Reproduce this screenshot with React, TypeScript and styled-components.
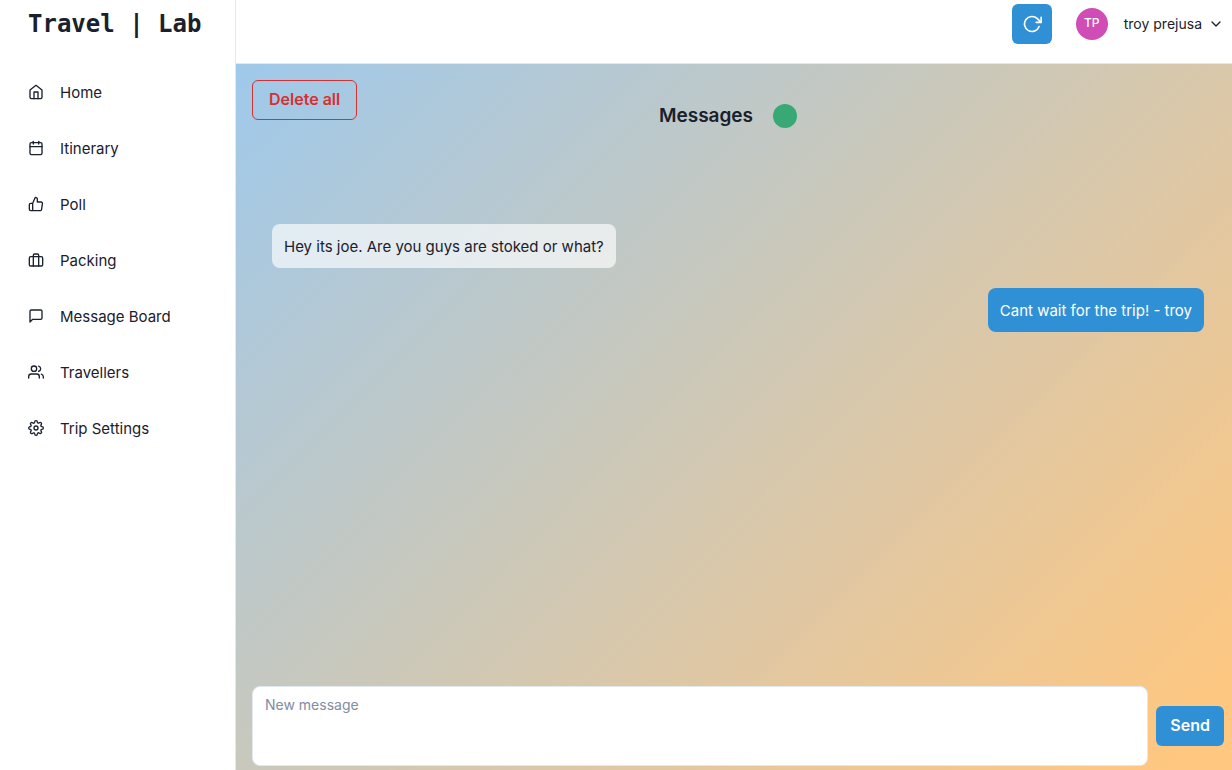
import React from 'react';
import styled, { createGlobalStyle } from 'styled-components';
import { IconType } from 'react-icons';
import {
  FiHome, FiCalendar, FiThumbsUp, FiBriefcase, FiMessageSquare, FiUsers, FiSettings, FiChevronDown, FiRotateCw,
} from 'react-icons/fi';

const GlobalStyle = createGlobalStyle`
  *, *::before, *::after { box-sizing: border-box; }
  body {
    margin: 0;
    background: #fff;
    color: #1a202c;
    font-family: Inter, "Liberation Sans", sans-serif;
    font-size: 15px;
    line-height: 24px;
  }
  h1, h2, p, ul { margin: 0; padding: 0; }
  button, textarea { font-family: inherit; }
`;

const Page = styled.div`
  display: flex;
  min-height: 100vh;
`;

const Sidebar = styled.aside`
  flex: 0 0 236px;
  border-right: 1px solid #e2e8f0;
`;

const Brand = styled.h1`
  padding: 8px 28px 0;
  margin-bottom: 24px;
  font-family: "DejaVu Sans Mono", "Liberation Mono", monospace;
  font-size: 24px;
  line-height: 32px;
  white-space: nowrap;
`;

const NavList = styled.ul`
  list-style: none;
`;

const NavLink = styled.a`
  display: flex;
  align-items: center;
  gap: 16px;
  height: 56px;
  padding: 0 28px;
  line-height: 25px;
  color: inherit;
  text-decoration: none;
`;

const Main = styled.div`
  flex: 1;
  min-width: 0;
  display: flex;
  flex-direction: column;
`;

const TopBar = styled.header`
  display: flex;
  justify-content: flex-end;
  gap: 24px;
  height: 64px;
  padding: 4px 8px;
  border-bottom: 1px solid #e2e8f0;
`;

const Button = styled.button`
  height: 40px;
  padding: 0 14px 2px;
  border: 0;
  border-radius: 6px;
  background: #3090d5;
  color: #fff;
  font-size: 16px;
  line-height: 20px;
  font-weight: 600;
`;

const IconButton = styled(Button)`
  width: 40px;
  padding: 0;
  display: flex;
  align-items: center;
  justify-content: center;
`;

const DeleteButton = styled(Button)`
  align-self: flex-start;
  padding: 0 16px 2px;
  border: 1px solid #d63031;
  background: transparent;
  color: #d63031;
`;

const UserMenu = styled.button`
  display: flex;
  align-items: center;
  height: 40px;
  padding: 0;
  border: 0;
  background: none;
  color: inherit;
  font-size: 14px;
  line-height: 20px;
`;

const Avatar = styled.span`
  width: 32px;
  height: 32px;
  margin-right: 16px;
  border-radius: 50%;
  background: #d04db8;
  color: #fff;
  font-size: 12px;
  line-height: 30px;
  font-weight: 500;
  text-align: center;
`;

const UserName = styled.span`
  margin-right: 6px;
`;

const Board = styled.main`
  flex: 1;
  display: flex;
  flex-direction: column;
  padding: 16px 8px 4px 16px;
  background: linear-gradient(135deg, #9fc9eb, #ffc780 96%);
`;

const Heading = styled.div`
  display: flex;
  align-items: center;
  justify-content: center;
  gap: 20px;
  margin-top: -16px;
  padding-right: 20px;
`;

const Title = styled.h2`
  font-size: 19px;
  line-height: 24px;
  font-weight: 600;
`;

const StatusDot = styled.span`
  width: 24px;
  height: 24px;
  border-radius: 50%;
  background: #38a975;
`;

const Thread = styled.div`
  flex: 1;
  display: flex;
  flex-direction: column;
  gap: 20px;
  padding: 96px 20px 20px;
`;

const Bubble = styled.p<{ $own?: boolean }>`
  align-self: ${({ $own }) => ($own ? 'flex-end' : 'flex-start')};
  padding: 11px 12px 9px;
  border-radius: 8px;
  background: ${({ $own }) => ($own ? '#3090d5' : 'rgba(255, 255, 255, 0.65)')};
  color: ${({ $own }) => ($own ? '#fff' : 'inherit')};
`;

const Composer = styled.form`
  display: flex;
  align-items: center;
  gap: 8px;
`;

const MessageInput = styled.textarea`
  flex: 1;
  min-width: 0;
  height: 80px;
  padding: 8px 12px;
  border: 1px solid #e2e8f0;
  border-radius: 8px;
  background: #fff;
  color: inherit;
  font-size: 14px;
  line-height: 20px;
  resize: none;
  &::placeholder { color: #7f8ca3; }
`;

const navItems: { label: string; icon: IconType }[] = [
  { label: 'Home', icon: FiHome },
  { label: 'Itinerary', icon: FiCalendar },
  { label: 'Poll', icon: FiThumbsUp },
  { label: 'Packing', icon: FiBriefcase },
  { label: 'Message Board', icon: FiMessageSquare },
  { label: 'Travellers', icon: FiUsers },
  { label: 'Trip Settings', icon: FiSettings },
];

export default function App() {
  return (
    <Page>
      <GlobalStyle />
      <Sidebar>
        <Brand>Travel | Lab</Brand>
        <nav>
          <NavList>
            {navItems.map(({ label, icon: Icon }) => (
              <li key={label}>
                <NavLink href="#">
                  <Icon size={16} />
                  {label}
                </NavLink>
              </li>
            ))}
          </NavList>
        </nav>
      </Sidebar>
      <Main>
        <TopBar>
          <IconButton type="button" aria-label="Refresh">
            <FiRotateCw size={20} />
          </IconButton>
          <UserMenu type="button">
            <Avatar>TP</Avatar>
            <UserName>troy prejusa</UserName>
            <FiChevronDown size={16} />
          </UserMenu>
        </TopBar>
        <Board>
          <DeleteButton type="button">Delete all</DeleteButton>
          <Heading>
            <Title>Messages</Title>
            <StatusDot />
          </Heading>
          <Thread>
            <Bubble>Hey its joe. Are you guys are stoked or what?</Bubble>
            <Bubble $own>Cant wait for the trip! - troy</Bubble>
          </Thread>
          <Composer>
            <MessageInput placeholder="New message" aria-label="New message" />
            <Button type="button">Send</Button>
          </Composer>
        </Board>
      </Main>
    </Page>
  );
}
